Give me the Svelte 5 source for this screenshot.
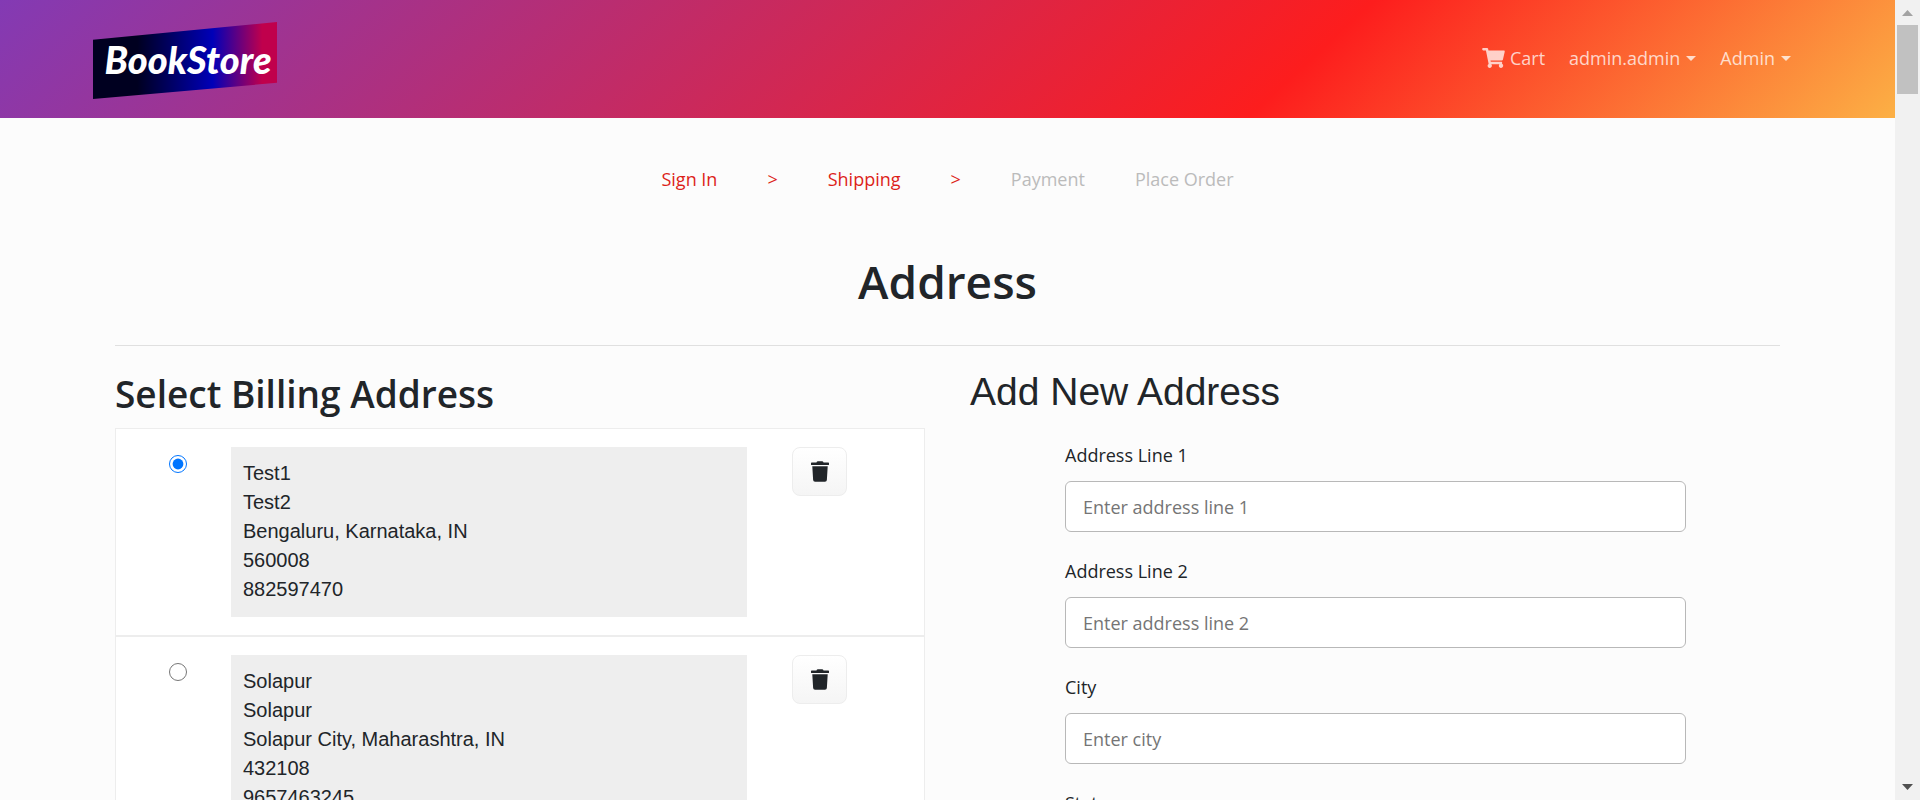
<script>
  const steps = [
    { label: 'Sign In', active: true },
    { label: '>', active: true },
    { label: 'Shipping', active: true },
    { label: '>', active: true },
    { label: 'Payment', active: false },
    { label: 'Place Order', active: false }
  ];

  const addresses = [
    { id: 1, lines: ['Test1', 'Test2', 'Bengaluru, Karnataka, IN', '560008', '882597470'] },
    { id: 2, lines: ['Solapur', 'Solapur', 'Solapur City, Maharashtra, IN', '432108', '9657463245'] }
  ];

  const fields = [
    { id: 'line1', label: 'Address Line 1', hint: 'Enter address line 1' },
    { id: 'line2', label: 'Address Line 2', hint: 'Enter address line 2' },
    { id: 'city', label: 'City', hint: 'Enter city' },
    { id: 'state', label: 'State', hint: 'Enter state' }
  ];

  let selected = $state(1);
</script>

<div class="viewport">
  <div class="page">
    <header>
      <a class="brand" href="#home"><span>BookStore</span></a>
      <nav>
        <a href="#cart">
          <svg class="cart" viewBox="0 0 576 512" aria-hidden="true"><path fill="currentColor" d="M528.12 301.319l47.273-208C578.806 78.301 567.391 64 551.99 64H159.208l-9.166-44.81C147.758 8.021 137.93 0 126.529 0H24C10.745 0 0 10.745 0 24v16c0 13.255 10.745 24 24 24h69.883l70.248 343.435C147.325 417.1 136 435.222 136 456c0 30.928 25.072 56 56 56s56-25.072 56-56c0-15.674-6.447-29.835-16.824-40h209.647C430.447 426.165 424 440.326 424 456c0 30.928 25.072 56 56 56s56-25.072 56-56c0-22.172-12.888-41.332-31.579-50.405l5.517-24.276c3.413-15.018-8.002-29.319-23.403-29.319H218.117l-6.545-32h293.145c11.206 0 20.92-7.754 23.403-18.681z"/></svg>
          Cart
        </a>
        <button type="button">admin.admin<i></i></button>
        <button type="button">Admin<i></i></button>
      </nav>
    </header>

    <main>
      <ol class="steps">
        {#each steps as step}
          <li class:active={step.active}>{step.label}</li>
        {/each}
      </ol>

      <h1>Address</h1>
      <hr />

      <div class="columns">
        <section class="billing">
          <h2>Select Billing Address</h2>
          {#each addresses as address}
            <div class="card">
              <div class="pick">
                <input type="radio" name="billing" id={`address-${address.id}`} value={address.id} bind:group={selected} />
              </div>
              <label class="details" for={`address-${address.id}`}>
                {#each address.lines as line}
                  <span>{line}</span>
                {/each}
              </label>
              <div class="remove">
                <button type="button" aria-label="Delete address">
                  <svg viewBox="0 0 448 512" aria-hidden="true"><path fill="currentColor" d="M432 32H312l-9.400-18.700A24 24 0 0 0 281.100 0H166.800a23.700 23.700 0 0 0-21.400 13.300L136 32H16A16 16 0 0 0 0 48v32a16 16 0 0 0 16 16h416a16 16 0 0 0 16-16V48a16 16 0 0 0-16-16zM32 128l21.200 339a48 48 0 0 0 47.900 45h245.800a48 48 0 0 0 47.900-45L416 128z"/></svg>
                </button>
              </div>
            </div>
          {/each}
        </section>

        <section class="new">
          <h2>Add New Address</h2>
          <form>
            {#each fields as field}
              <div class="field">
                <label for={field.id}>{field.label}</label>
                <input type="text" id={field.id} placeholder={field.hint} />
              </div>
            {/each}
          </form>
        </section>
      </div>
    </main>
  </div>

  <div class="scrollbar" aria-hidden="true">
    <svg viewBox="0 0 11 6"><path fill="#a3a3a3" d="M0 6L5.500 0L11 6z"/></svg>
    <div class="thumb"></div>
    <svg viewBox="0 0 11 6"><path fill="#505050" d="M0 0L5.500 6L11 0z"/></svg>
  </div>
</div>

<style>
  :global(body) {
    margin: 0;
    overflow: hidden;
  }

  .viewport {
    display: flex;
    height: 100vh;
    overflow: hidden;
    background: #fcfcfc;
    color: #212529;
    font-family: 'Open Sans', 'Noto Sans', sans-serif;
    font-size: 18px;
    line-height: 30px;
  }

  .viewport * {
    box-sizing: border-box;
  }

  .page {
    flex: 1;
    min-width: 0;
    overflow: hidden;
  }

  header {
    display: flex;
    align-items: center;
    justify-content: space-between;
    height: 118px;
    padding: 0 104px 0 93px;
    background: linear-gradient(137deg, #833ab4 0%, #fd1d1d 68%, #fcb045 100%);
  }

  .brand {
    display: flex;
    align-items: center;
    justify-content: center;
    width: 184px;
    height: 77px;
    margin-top: 3px;
    padding: 0 0 4px 6px;
    background: linear-gradient(90deg, #000020 0%, #000020 24%, #0000b8 65%, #c0004c 92%);
    clip-path: polygon(0 23%, 100% 0, 100% 79%, 0 100%);
    color: #fff;
    font-family: Lato, sans-serif;
    font-size: 38px;
    font-style: italic;
    font-weight: 900;
    text-decoration: none;
  }

  nav {
    display: flex;
    align-items: center;
    gap: 24px;
    padding-bottom: 2px;
  }

  nav a,
  nav button {
    display: flex;
    align-items: center;
    padding: 0;
    border: 0;
    background: none;
    color: rgba(255, 255, 255, 0.75);
    font: inherit;
    text-decoration: none;
  }

  .cart {
    width: 23px;
    height: 20px;
    margin-right: 5px;
  }

  nav i {
    margin-left: 6px;
    border: 5px solid transparent;
    border-top-color: currentColor;
    border-bottom: 0;
  }

  main {
    padding: 0 115px;
  }

  .steps {
    display: flex;
    justify-content: center;
    gap: 50px;
    margin: 0;
    padding: 46px 0 0;
    list-style: none;
    color: #bbb;
  }

  .steps .active {
    color: #dc1f1a;
  }

  h1,
  h2 {
    margin: 0;
    font-weight: 600;
  }

  h1 {
    margin-top: 57px;
    font-size: 46px;
    line-height: 60px;
    text-align: center;
  }

  hr {
    height: 1px;
    margin: 34px 0 0;
    border: 0;
    background: #e0e0e0;
  }

  .columns {
    display: grid;
    grid-template-columns: minmax(0, 1fr) minmax(0, 1fr);
    gap: 45px;
  }

  .billing h2 {
    margin-top: 24px;
    font-size: 37px;
    line-height: 48px;
    padding-bottom: 10px;
  }

  .card {
    display: grid;
    grid-template-columns: 115px 1fr 177px;
    padding: 18px 0;
    border: 1px solid #ededed;
    background: #fff;
    font-family: 'Liberation Sans', Arial, sans-serif;
    font-size: 20px;
    line-height: 29px;
  }

  .pick {
    padding-left: 53px;
  }

  .pick input {
    display: block;
    width: 18px;
    height: 18px;
    margin: 8px 0 0;
    accent-color: #0075ff;
  }

  .details {
    display: flex;
    flex-direction: column;
    padding: 12px 12px 13px;
    background: #eee;
  }

  .remove {
    padding-left: 45px;
  }

  .remove button {
    display: flex;
    align-items: center;
    justify-content: center;
    width: 55px;
    height: 49px;
    padding: 0;
    border: 1px solid #ededed;
    border-radius: 8px;
    background: linear-gradient(#fff, #f5f5f5);
    color: #212529;
  }

  .remove svg {
    width: 18px;
    height: 21px;
  }

  .new h2 {
    margin-top: 22px;
    font-family: 'Liberation Sans', Arial, sans-serif;
    font-size: 39px;
    font-weight: 400;
    line-height: 48px;
  }

  form {
    padding: 24px 94px 0 95px;
  }

  .field {
    display: flex;
    flex-direction: column;
    gap: 11px;
    margin-bottom: 24px;
  }

  .field input {
    width: 100%;
    height: 51px;
    padding: 0 17px;
    border: 1px solid #b8b8b8;
    border-radius: 6px;
    background: #fff;
    font: inherit;
  }

  .field input::placeholder {
    color: #757575;
    opacity: 1;
  }

  .scrollbar {
    display: flex;
    flex-direction: column;
    align-items: center;
    width: 25px;
    padding: 10px 0;
    background: #f1f1f1;
  }

  .scrollbar svg {
    width: 11px;
    height: 6px;
  }

  .thumb {
    width: 21px;
    height: 69px;
    margin: 9px 0 auto;
    background: #c1c1c1;
  }
</style>
